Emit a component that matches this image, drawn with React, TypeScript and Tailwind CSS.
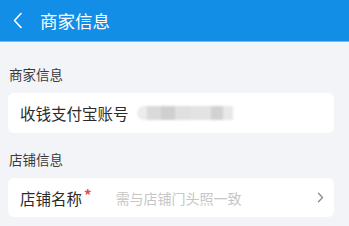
import React from "react";

const font = { fontFamily: '"Noto Sans CJK SC", "Noto Sans", sans-serif' };

export default function App() {
  return (
    <div
      className="w-[349px] h-[226px] overflow-hidden bg-[#f3f4f8] font-['Noto_Sans_CJK_SC',sans-serif]"
      style={font}
    >
      <div className="h-[42px] bg-[#138ee6] border-b border-[#72bbf0] flex items-center">
        <svg width="11" height="17" viewBox="0 0 11 17" className="ml-[12px]">
          <path d="M9 1.5 L2.5 8.5 L9 15.5" fill="none" stroke="#ffffff" strokeWidth="1.6" strokeLinecap="round" strokeLinejoin="round" />
        </svg>
        <span className="ml-[17px] text-[17.5px] leading-[24px] text-white">商家信息</span>
      </div>

      <div className="mt-[22px] px-[9px] text-[13.5px] leading-[20px] text-[#3a3a3a]">商家信息</div>
      <div className="mt-[9px] ml-[8px] mr-[15px] h-[40px] bg-white rounded-[6px] flex items-center px-[12px]">
        <span className="text-[15.5px] leading-[22px] text-[#2b2b2b]">收钱支付宝账号</span>
        <div className="ml-[8px] flex h-[14px] blur-[0.8px]">
          <div className="w-[10px] bg-[#ececec] rounded-l-full"></div>
          <div className="w-[14px] bg-[#dadada]"></div>
          <div className="w-[14px] bg-[#cfcfcf]"></div>
          <div className="w-[16px] bg-[#e0e0e0]"></div>
          <div className="w-[20px] bg-[#e3e3e3]"></div>
          <div className="w-[12px] bg-[#d2d2d2]"></div>
          <div className="w-[10px] bg-[#e8e8e8]"></div>
        </div>
      </div>

      <div className="mt-[16px] px-[9px] text-[13.5px] leading-[20px] text-[#3a3a3a]">店铺信息</div>
      <div className="mt-[9px] ml-[8px] mr-[15px] h-[39px] bg-white rounded-[6px] flex items-center pl-[12px] pr-[10px]">
        <span className="text-[15.5px] leading-[22px] text-[#2b2b2b]">店铺名称</span>
        <span className="self-start mt-[9px] ml-[2px] text-[15px] leading-[16px] font-bold text-[#ec4a4a]">*</span>
        <span className="ml-[24px] text-[14px] leading-[20px] text-[#c6c6c6]">需与店铺门头照一致</span>
        <div className="flex-1"></div>
        <svg width="7" height="11" viewBox="0 0 7 11">
          <path d="M1.5 1.2 L5.5 5.5 L1.5 9.8" fill="none" stroke="#8a8a8a" strokeWidth="1.3" strokeLinecap="round" strokeLinejoin="round" />
        </svg>
      </div>
    </div>
  );
}
